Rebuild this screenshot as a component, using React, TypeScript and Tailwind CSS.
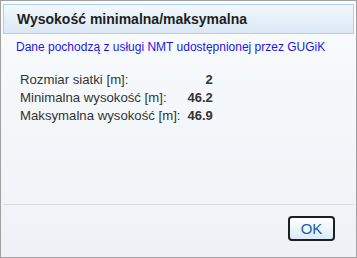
const rows: [string, string][] = [
  ["Rozmiar siatki [m]:", "2"],
  ["Minimalna wysokość [m]:", "46.2"],
  ["Maksymalna wysokość [m]:", "46.9"],
];

export default function App() {
  return (
    <div
      className="flex h-[258px] w-[357px] flex-col border border-[#a0a0a0] bg-gradient-to-b from-[#f9fbfd] to-[#eef2f6]"
      style={{ fontFamily: '"Liberation Sans", Arial, sans-serif' }}
    >
      <div className="mx-[2px] mt-[3px] flex h-[30px] items-center border border-[#a9d1f0] bg-gradient-to-b from-[#f3f8fd] to-[#dbe8f5] pl-[13px]">
        <span className="text-[14px] font-bold text-[#1e1e1e]">
          Wysokość minimalna/maksymalna
        </span>
      </div>

      <div className="flex-1">
        <p className="mt-[6px] pl-[15px] text-[12px] leading-[14px] text-[#1a1ae6]">
          Dane pochodzą z usługi NMT udostępnionej przez GUGiK
        </p>
        <div className="ml-[19px] mt-[17px] grid w-max grid-cols-[auto_auto] gap-x-[7px] text-[13.2px] leading-[18px] text-[#333]">
          {rows.map(([label, value]) => (
            <div key={label} className="contents">
              <span>{label}</span>
              <span className="text-right text-[13px] font-bold">{value}</span>
            </div>
          ))}
        </div>
      </div>

      <div className="mx-[2px] h-px bg-[#d9dde2]" />

      <div className="flex h-[52px] justify-end pr-[21px] pt-[11px]">
        <button className="h-[25px] w-[47px] rounded-[4px] border-2 border-[#1f1f1f] bg-gradient-to-b from-[#ffffff] to-[#dbeaf8] text-[15px] leading-none text-[#1c5f9e]">
          OK
        </button>
      </div>
    </div>
  );
}
